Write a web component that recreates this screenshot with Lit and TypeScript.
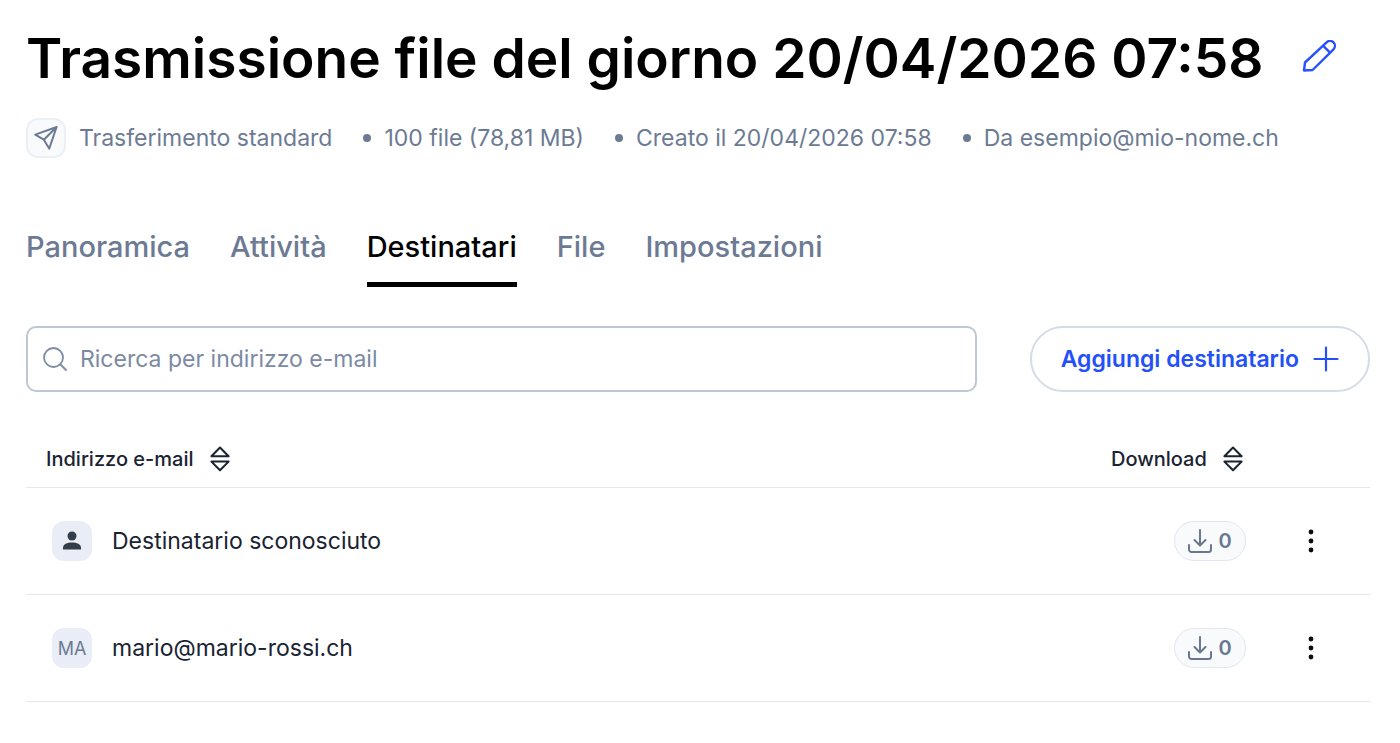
import { LitElement, html, css } from "lit";
import { customElement, property, state } from "lit/decorators.js";

interface Recipient {
  label: string;
  initials: string;
  downloads: number;
}

const sortIcon = html`<svg class="sort-icon" viewBox="0 0 20 26" aria-hidden="true">
  <path d="M10 1.500 18.600 10.200H1.400ZM1.400 15.600H18.600L10 24.300Z" />
</svg>`;

@customElement("recipient-table")
export class RecipientTable extends LitElement {
  @property({ attribute: false }) rows: Recipient[] = [];

  static styles = css`
    :host {
      display: block;
      color: #1a2332;
    }
    .table {
      width: 100%;
      border-collapse: separate;
      border-spacing: 0;
    }
    .head,
    .cell {
      box-sizing: border-box;
      border-bottom: 1px solid #e3e8ef;
      padding: 0;
      text-align: left;
      font-weight: 400;
    }
    .head {
      height: 57px;
    }
    .cell {
      height: 107px;
      font-size: 23px;
    }
    .email {
      padding-left: 20px;
    }
    .cell.email {
      padding-left: 26px;
    }
    .count-col {
      width: 135px;
    }
    .action-col {
      width: 124px;
    }
    .action-col.cell {
      padding-left: 52px;
    }
    .sort {
      display: flex;
      align-items: center;
      gap: 16px;
      padding: 0;
      border: 0;
      background: none;
      color: inherit;
      font: 500 20px/26px Inter, sans-serif;
      cursor: pointer;
    }
    .sort-icon {
      width: 20px;
      height: 26px;
      fill: none;
      stroke: currentColor;
      stroke-width: 2;
      stroke-linejoin: round;
    }
    .person {
      display: flex;
      align-items: center;
      gap: 20px;
    }
    .avatar {
      display: grid;
      place-items: center;
      width: 40px;
      height: 40px;
      border-radius: 12px;
      background: #e9edf6;
      color: #6c7b93;
      font-size: 18px;
    }
    .avatar svg {
      width: 20px;
      height: 20px;
      fill: #333e4a;
    }
    .pill {
      box-sizing: border-box;
      display: flex;
      align-items: center;
      justify-content: center;
      gap: 6px;
      width: 72px;
      height: 40px;
      margin-left: auto;
      border: 1px solid #e1e6f1;
      border-radius: 20px;
      background: #f8fafc;
      color: #687890;
      font-size: 20px;
      font-weight: 600;
    }
    .pill svg {
      width: 24px;
      height: 24px;
      fill: none;
      stroke: currentColor;
      stroke-width: 2;
      stroke-linecap: round;
      stroke-linejoin: round;
    }
    .menu {
      display: grid;
      place-items: center;
      width: 26px;
      height: 40px;
      padding: 0;
      border: 0;
      background: none;
      cursor: pointer;
    }
    .menu svg {
      width: 6px;
      height: 24px;
      fill: #0b0d10;
    }
  `;

  render() {
    return html`<table class="table">
      <thead>
        <tr>
          <th class="head email" scope="col">
            <button class="sort" type="button">Indirizzo e-mail ${sortIcon}</button>
          </th>
          <th class="head count-col" scope="col">
            <button class="sort" type="button">Download ${sortIcon}</button>
          </th>
          <td class="head action-col"></td>
        </tr>
      </thead>
      <tbody>
        ${this.rows.map(
          (row) => html`<tr>
            <td class="cell email">
              <div class="person">
                <span class="avatar">
                  ${row.initials ||
                  html`<svg viewBox="0 0 20 20" aria-hidden="true">
                    <circle cx="10" cy="5" r="4.500" />
                    <path d="M1 18.600v-1.800C1 13.400 5.200 11.600 10 11.600s9 1.800 9 5.200v1.800Z" />
                  </svg>`}
                </span>
                <span>${row.label}</span>
              </div>
            </td>
            <td class="cell count-col">
              <div class="pill">
                <svg viewBox="0 0 24 24" aria-hidden="true">
                  <path d="M12 1v15M6.500 11l5.500 5.500 5.500-5.500M1 16v4.500A2.500 2.500 0 0 0 3.500 23h17a2.500 2.500 0 0 0 2.500-2.500V16" />
                </svg>
                <span>${row.downloads}</span>
              </div>
            </td>
            <td class="cell action-col">
              <button class="menu" type="button" aria-label="Azioni">
                <svg viewBox="0 0 6 24" aria-hidden="true">
                  <circle cx="3" cy="3" r="2.400" />
                  <circle cx="3" cy="12" r="2.400" />
                  <circle cx="3" cy="21" r="2.400" />
                </svg>
              </button>
            </td>
          </tr>`
        )}
      </tbody>
    </table>`;
  }
}

@customElement("app-root")
export class AppRoot extends LitElement {
  @state() private activeTab = "Destinatari";

  private tabs = ["Panoramica", "Attività", "Destinatari", "File", "Impostazioni"];
  private details = ["100 file (78,81 MB)", "Creato il 20/04/2026 07:58", "Da esempio@mio-nome.ch"];
  private recipients: Recipient[] = [
    { label: "Destinatario sconosciuto", initials: "", downloads: 0 },
    { label: "mario@mario-rossi.ch", initials: "MA", downloads: 0 },
  ];

  static styles = css`
    :host {
      display: block;
      padding: 24px 30px 24px 26px;
      background: #fff;
      font-family: Inter, sans-serif;
    }
    .heading {
      display: flex;
      align-items: center;
      gap: 38px;
    }
    .title {
      margin: 0;
      color: #000;
      font-size: 55px;
      font-weight: 600;
      line-height: 68px;
      white-space: nowrap;
    }
    .edit {
      display: flex;
      padding: 0;
      border: 0;
      background: none;
      color: #2850ff;
      cursor: pointer;
    }
    .edit svg {
      width: 36px;
      height: 36px;
      fill: none;
      stroke: currentColor;
      stroke-width: 2.400;
      stroke-linejoin: round;
    }
    .meta {
      display: flex;
      align-items: center;
      margin-top: 26px;
      color: #6c7b93;
      font-size: 23px;
      line-height: 40px;
      white-space: nowrap;
    }
    .kind {
      box-sizing: border-box;
      display: grid;
      place-items: center;
      width: 40px;
      height: 40px;
      margin-right: 13px;
      border: 2px solid #ebf0f7;
      border-radius: 12px;
      background: #f9fafc;
    }
    .kind svg {
      width: 24px;
      height: 24px;
      fill: none;
      stroke: currentColor;
      stroke-width: 2;
      stroke-linejoin: round;
      stroke-linecap: round;
    }
    .detail {
      display: flex;
      align-items: center;
      gap: 13px;
      margin-left: 31px;
    }
    .detail::before {
      content: "";
      width: 8px;
      height: 8px;
      border-radius: 50%;
      background: currentColor;
    }
    .tabs {
      display: flex;
      gap: 40px;
      margin-top: 69px;
    }
    .tab {
      padding: 0 0 15px;
      border: 0;
      border-bottom: 5px solid transparent;
      background: none;
      color: #6c7b93;
      font: 500 29px/40px Inter, sans-serif;
      cursor: pointer;
    }
    .tab.active {
      border-color: #000;
      color: #000;
    }
    .tools {
      display: flex;
      gap: 53px;
      margin: 39px 0;
    }
    .search {
      box-sizing: border-box;
      display: flex;
      flex: 1;
      align-items: center;
      gap: 13px;
      height: 66px;
      padding: 0 15px;
      border: 2px solid #bfc6d5;
      border-radius: 10px;
      color: #7c8aa3;
    }
    .search svg {
      width: 24px;
      height: 24px;
      fill: none;
      stroke: currentColor;
      stroke-width: 1.800;
      stroke-linecap: round;
    }
    .field {
      flex: 1;
      min-width: 0;
      padding: 0;
      border: 0;
      outline: 0;
      background: none;
      color: #1a2332;
      font: 400 23px/32px Inter, sans-serif;
    }
    .field::placeholder {
      color: #7c8aa3;
      opacity: 1;
    }
    .add {
      display: flex;
      align-items: center;
      gap: 14px;
      height: 66px;
      padding: 0 29px;
      border: 2px solid #d6dbe6;
      border-radius: 33px;
      background: #fff;
      color: #2450f8;
      font: 600 23px/32px Inter, sans-serif;
      white-space: nowrap;
      cursor: pointer;
    }
    .add svg {
      width: 26px;
      height: 26px;
      fill: none;
      stroke: currentColor;
      stroke-width: 2.200;
      stroke-linecap: round;
    }
  `;

  render() {
    return html`
      <header>
        <div class="heading">
          <h1 class="title">Trasmissione file del giorno 20/04/2026 07:58</h1>
          <button class="edit" type="button" aria-label="Modifica il titolo">
            <svg viewBox="0 0 36 36" aria-hidden="true">
              <path d="M3 22.500 24.600 2.400a4.800 4.800 0 0 1 6.900 6.900L10.600 30 2 30.500ZM21 5.700l7 7" />
            </svg>
          </button>
        </div>
        <div class="meta">
          <span class="kind">
            <svg viewBox="0 0 24 24" aria-hidden="true">
              <path d="M1.300 8.600 22.600 1 15.200 22.600 9.800 13.700ZM22.600 1 9.800 13.700" />
            </svg>
          </span>
          <span>Trasferimento standard</span>
          ${this.details.map((text) => html`<span class="detail">${text}</span>`)}
        </div>
      </header>
      <nav class="tabs" role="tablist">
        ${this.tabs.map(
          (tab) => html`<button
            class="tab ${tab === this.activeTab ? "active" : ""}"
            type="button"
            role="tab"
            aria-selected=${tab === this.activeTab}
            @click=${() => (this.activeTab = tab)}
          >${tab}</button>`
        )}
      </nav>
      <div class="tools">
        <label class="search">
          <svg viewBox="0 0 24 24" aria-hidden="true">
            <circle cx="10.500" cy="10.500" r="9.500" />
            <path d="m17.500 17.500 5.500 5.500" />
          </svg>
          <input class="field" type="text" placeholder="Ricerca per indirizzo e-mail" aria-label="Ricerca per indirizzo e-mail" />
        </label>
        <button class="add" type="button">
          Aggiungi destinatario
          <svg viewBox="0 0 26 26" aria-hidden="true"><path d="M13 1.500v23M1.500 13h23" /></svg>
        </button>
      </div>
      <recipient-table .rows=${this.recipients}></recipient-table>
    `;
  }
}
